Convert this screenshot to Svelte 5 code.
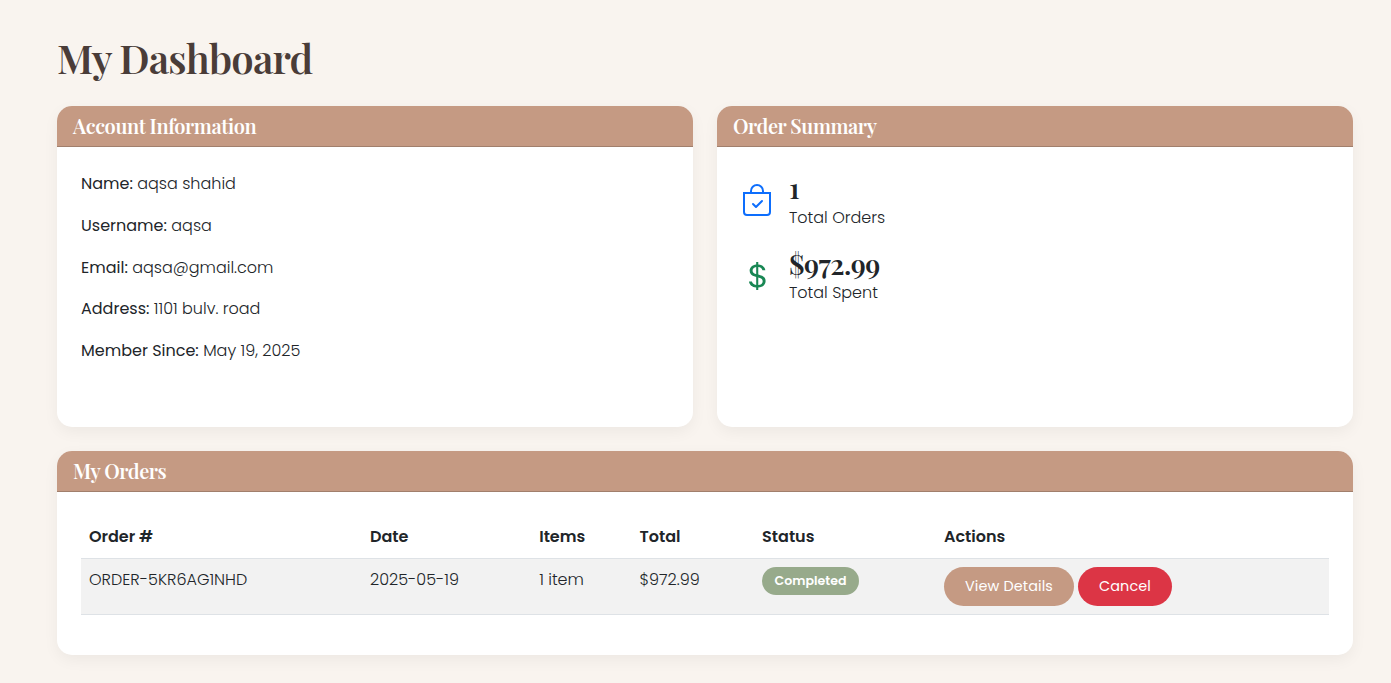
<script>
  const account = [
    { label: 'Name:', value: 'aqsa shahid' },
    { label: 'Username:', value: 'aqsa' },
    { label: 'Email:', value: 'aqsa@gmail.com' },
    { label: 'Address:', value: '1101 bulv. road' },
    { label: 'Member Since:', value: 'May 19, 2025' }
  ];
  const columns = ['Order #', 'Date', 'Items', 'Total', 'Status', 'Actions'];
  const order = ['ORDER-5KR6AG1NHD', '2025-05-19', '1 item', '$972.99'];
</script>

<main>
  <h1>My Dashboard</h1>

  <div class="cards">
    <section class="card info">
      <h2>Account Information</h2>
      <div class="body">
        {#each account as row}
          <p><strong>{row.label}</strong> {row.value}</p>
        {/each}
      </div>
    </section>

    <section class="card info">
      <h2>Order Summary</h2>
      <div class="body">
        <div class="stat">
          <svg class="blue" viewBox="0 0 16 16" fill="currentColor">
            <path fill-rule="evenodd" d="M10.854 8.146a.5.5 0 0 1 0 .708l-3 3a.5.5 0 0 1-.708 0l-1.5-1.5a.5.5 0 1 1 .708-.708L7.5 10.793l2.646-2.647a.5.5 0 0 1 .708 0" />
            <path d="M8 1a2.5 2.5 0 0 1 2.5 2.5V4h-5v-.5A2.5 2.5 0 0 1 8 1m3.5 3v-.5a3.5 3.5 0 1 0-7 0V4H1v10a2 2 0 0 0 2 2h10a2 2 0 0 0 2-2V4zM2 5h12v9a1 1 0 0 1-1 1H3a1 1 0 0 1-1-1z" />
          </svg>
          <div>
            <h3>1</h3>
            <div>Total Orders</div>
          </div>
        </div>
        <div class="stat">
          <svg class="green" viewBox="0 0 16 16" fill="currentColor">
            <path d="M4 10.781c.148 1.667 1.513 2.85 3.591 3.003V15h1.043v-1.216c2.27-.179 3.678-1.438 3.678-3.3 0-1.59-.947-2.51-2.956-3.028l-.722-.187V3.467c1.122.11 1.879.714 2.07 1.616h1.47c-.166-1.6-1.54-2.748-3.54-2.875V1H7.591v1.233c-1.939.23-3.27 1.472-3.27 3.156 0 1.454.966 2.483 2.661 2.917l.61.162v4.031c-1.149-.17-1.94-.8-2.131-1.718zm3.391-3.836c-1.043-.263-1.6-.825-1.6-1.616 0-.944.704-1.641 1.8-1.828v3.495l-.2-.05zm1.591 1.872c1.287.323 1.852.859 1.852 1.769 0 1.097-.826 1.828-2.2 1.939V8.73z" />
          </svg>
          <div>
            <h3>$972.99</h3>
            <div>Total Spent</div>
          </div>
        </div>
      </div>
    </section>
  </div>

  <section class="card orders">
    <h2>My Orders</h2>
    <div class="body">
      <div class="row head">
        {#each columns as label}<div>{label}</div>{/each}
      </div>
      <div class="row item">
        {#each order as text}<div>{text}</div>{/each}
        <div><span class="badge">Completed</span></div>
        <div class="actions">
          <button class="view">View Details</button>
          <button class="cancel">Cancel</button>
        </div>
      </div>
    </div>
  </section>
</main>

<style>
  :global(body) {
    background: #f9f4ef;
  }
  main {
    box-sizing: border-box;
    width: 1391px;
    height: 683px;
    padding: 34.4px 38px 0 57px;
    overflow: hidden;
    font-family: Poppins, Inter, sans-serif;
    font-size: 16px;
    font-weight: 300;
    line-height: 1.6;
    color: #212529;
  }
  h1,
  h2,
  h3 {
    margin: 0;
    font-family: 'Playfair Display', 'Liberation Serif', serif;
    font-weight: 600;
    line-height: 1.2;
    letter-spacing: -0.02em;
  }
  h1 {
    margin-bottom: 24px;
    font-size: 40px;
    color: #4a3c38;
  }
  h2 {
    box-sizing: border-box;
    height: 41px;
    padding: 8px 16px;
    border-bottom: 1px solid #a17f6c;
    background: #c59a83;
    color: #fff;
    font-size: 20px;
  }
  h3 {
    font-size: 28px;
  }
  .cards {
    display: grid;
    grid-template-columns: 1fr 1fr;
    gap: 24px;
    margin-bottom: 24px;
  }
  .card {
    box-sizing: border-box;
    overflow: hidden;
    border-radius: 15px;
    background: #fff;
    box-shadow: 0 5px 15px rgba(0, 0, 0, 0.05);
  }
  .info {
    height: 320.8px;
  }
  .orders {
    height: 204px;
  }
  .body {
    padding: 24px;
  }
  p {
    margin: 0 0 16px;
  }
  strong {
    font-weight: 400;
  }
  .stat {
    display: flex;
    align-items: center;
    gap: 16px;
    margin-bottom: 16px;
  }
  .stat svg {
    width: 32px;
    height: 32px;
  }
  .stat .blue {
    margin-bottom: 2px;
    color: #0d6efd;
  }
  .green {
    color: #198754;
  }
  .row {
    display: grid;
    grid-template-columns: 281px 169.2px 100.3px 122.6px 181.9px 1fr;
    border-bottom: 1px solid #dee2e6;
  }
  .row > div {
    padding: 8px;
  }
  .head {
    height: 42px;
    font-weight: 600;
  }
  .item {
    height: 55px;
    background: #f2f2f2;
  }
  .badge {
    display: inline-block;
    box-sizing: border-box;
    width: 97px;
    height: 28px;
    border-radius: 14px;
    background: #97aa8b;
    color: #fff;
    font-size: 12.6px;
    font-weight: 600;
    line-height: 28px;
    text-align: center;
  }
  .actions {
    display: flex;
    gap: 4px;
  }
  button {
    height: 39px;
    padding: 0;
    border: 0;
    border-radius: 20px;
    color: #fff;
    font: inherit;
    font-size: 14.4px;
    font-weight: 400;
    letter-spacing: 0.12px;
  }
  .view {
    width: 130px;
    background: #c59a83;
  }
  .cancel {
    width: 94px;
    background: #dc3545;
  }
</style>
